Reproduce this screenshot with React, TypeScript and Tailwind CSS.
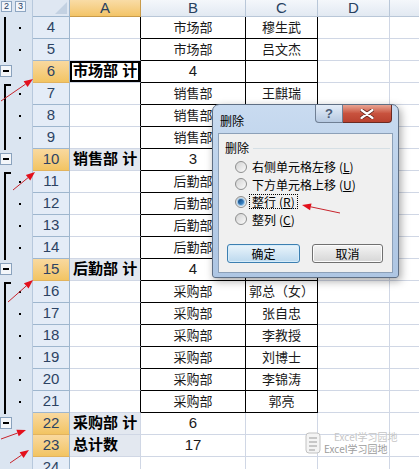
import React from 'react';

interface SheetRow {
  n: number;
  a?: string;
  b?: string;
  c?: string;
  selected?: boolean;
  active?: boolean;
}

const rows: SheetRow[] = [
  { n: 4, b: '市场部', c: '穆生武' },
  { n: 5, b: '市场部', c: '吕文杰' },
  { n: 6, a: '市场部 计', b: '4', selected: true, active: true },
  { n: 7, b: '销售部', c: '王麒瑞' },
  { n: 8, b: '销售部' },
  { n: 9, b: '销售部' },
  { n: 10, a: '销售部 计', b: '3', selected: true },
  { n: 11, b: '后勤部' },
  { n: 12, b: '后勤部' },
  { n: 13, b: '后勤部' },
  { n: 14, b: '后勤部' },
  { n: 15, a: '后勤部 计', b: '4', selected: true },
  { n: 16, b: '采购部', c: '郭总（女）' },
  { n: 17, b: '采购部', c: '张自忠' },
  { n: 18, b: '采购部', c: '李教授' },
  { n: 19, b: '采购部', c: '刘博士' },
  { n: 20, b: '采购部', c: '李锦涛' },
  { n: 21, b: '采购部', c: '郭亮' },
  { n: 22, a: '采购部 计', b: '6', selected: true },
  { n: 23, a: '总计数', b: '17', selected: true },
  { n: 24 },
];

// page y of a row's top edge (header is 17px, rows are 22px)
const rowTop = (n: number) => 17 + (n - 4) * 22;

const detailRows = [4, 5, 7, 8, 9, 11, 12, 13, 14, 16, 17, 18, 19, 20, 21];
const minusRows = [6, 10, 15, 22];
const groups = [
  { from: 7, to: 10 },
  { from: 11, to: 15 },
  { from: 16, to: 22 },
];

const OutlineBar: React.FC = () => (
  <div className="w-[33px] shrink-0 flex flex-col bg-[#dbe5f1] border-r border-[#b7c8dc]">
    <div className="h-[17px] flex items-start gap-[3px] pl-[1px] pt-[1px]">
      <div className="w-[11px] h-[11px] border border-[#8ea6c2] bg-[#f2f5fa] text-[9px] leading-[9px] text-[#1f3c62] flex items-center justify-center font-['Liberation_Sans',sans-serif]">
        2
      </div>
      <div className="w-[11px] h-[11px] border border-[#8ea6c2] bg-[#f2f5fa] text-[9px] leading-[9px] text-[#1f3c62] flex items-center justify-center font-['Liberation_Sans',sans-serif]">
        3
      </div>
    </div>
    <svg width="32" height="452" viewBox="0 17 32 452" className="block">
      {/* first group continues from above */}
      <rect x="4" y="17" width="2" height="45" fill="#000" />
      {groups.map((g) => {
        const top = rowTop(g.from) + 1;
        const bottom = rowTop(g.to) + 1;
        return (
          <g key={g.from}>
            <rect x="4" y={top} width="7" height="2" fill="#000" />
            <rect x="4" y={top} width="2" height={bottom - top} fill="#000" />
          </g>
        );
      })}
      {detailRows.map((n) => (
        <rect key={n} x="19" y={rowTop(n) + 10} width="2" height="2" fill="#000" />
      ))}
      {minusRows.map((n) => (
        <g key={n}>
          <rect x="0.5" y={rowTop(n) + 4.5} width="11" height="11" fill="#f3f6fa" stroke="#8aa2bd" />
          <rect x="3" y={rowTop(n) + 9} width="6" height="2" fill="#000" />
        </g>
      ))}
    </svg>
  </div>
);

const ColHead: React.FC<{ label: string; w: string; active?: boolean }> = ({ label, w, active }) => (
  <div
    className={
      active
        ? `${w} h-[17px] shrink-0 flex items-center justify-center border-r border-b border-[#c99b4a] bg-gradient-to-b from-[#f9dca6] to-[#f3c467] text-[15px] text-[#27415f] font-['Liberation_Sans',sans-serif]`
        : `${w} h-[17px] shrink-0 flex items-center justify-center border-r border-b border-[#b9c7d8] bg-gradient-to-b from-[#f4f7fb] to-[#e2e9f2] text-[15px] text-[#27415f] font-['Liberation_Sans',sans-serif]`
    }
  >
    {label}
  </div>
);

const SheetLine: React.FC<{ row: SheetRow }> = ({ row }) => {
  const inTable = row.n <= 21;
  return (
    <div className="flex h-[22px] font-['Liberation_Sans','Noto_Sans_CJK_SC',sans-serif]">
      <div
        className={
          row.selected
            ? 'w-[37px] shrink-0 flex items-center justify-center border-r border-b border-r-[#9eb6ce] border-b-[#e2b35e] bg-gradient-to-b from-[#f9d99f] to-[#f2c462] text-[15px] text-[#2c4363]'
            : 'w-[37px] shrink-0 flex items-center justify-center border-r border-b border-[#9eb6ce] bg-[#e4ecf7] text-[15px] text-[#2c4363]'
        }
      >
        {row.n}
      </div>
      <div
        className={[
          'w-[71px] shrink-0 flex items-center pl-[3px] border-b border-r border-b-[#d0d7e5] whitespace-nowrap overflow-hidden text-[15px] font-bold text-black',
          inTable ? 'border-r-black' : 'border-r-[#d0d7e5]',
          row.active ? 'bg-white shadow-[inset_0_0_0_2px_#000]' : row.selected ? 'bg-[#e3e8f0]' : 'bg-white',
        ].join(' ')}
      >
        {row.a}
      </div>
      <div
        className={
          inTable
            ? 'w-[105px] shrink-0 flex items-center justify-center border-b border-r border-black text-[13px] text-[#1a1a1a]'
            : 'w-[105px] shrink-0 flex items-center justify-center border-b border-r border-[#d0d7e5] text-[15px] text-[#1a1a1a]'
        }
      >
        <span className={/\d/.test(row.b ?? '') ? 'text-[15px]' : ''}>{row.b}</span>
      </div>
      <div
        className={
          inTable
            ? 'w-[72px] shrink-0 flex items-center justify-center border-b border-r border-black text-[13px] text-[#1a1a1a] whitespace-nowrap'
            : 'w-[72px] shrink-0 flex items-center justify-center border-b border-r border-[#d0d7e5] text-[13px] text-[#1a1a1a]'
        }
      >
        {row.c}
      </div>
      <div className="w-[72px] shrink-0 border-b border-r border-[#d0d7e5]" />
      <div className="w-[62px] shrink-0 border-b border-r border-[#d0d7e5]" />
    </div>
  );
};

const Sheet: React.FC = () => (
  <div className="flex flex-col">
    <div className="flex">
      <div className="w-[37px] h-[17px] shrink-0 border-r border-b border-[#9eb6ce] bg-[#dfe7f2] flex items-end justify-end pr-[2px] pb-[2px]">
        <svg width="12" height="12" viewBox="0 0 12 12">
          <polygon points="12,0 12,12 0,12" fill="#c3d1e2" />
        </svg>
      </div>
      <ColHead label="A" w="w-[71px]" active />
      <ColHead label="B" w="w-[105px]" />
      <ColHead label="C" w="w-[72px]" />
      <ColHead label="D" w="w-[72px]" />
      <ColHead label="" w="w-[62px]" />
    </div>
    {rows.map((r) => (
      <SheetLine key={r.n} row={r} />
    ))}
  </div>
);

const Radio: React.FC<{ checked?: boolean }> = ({ checked }) => (
  <span className="w-[12px] h-[12px] shrink-0 rounded-full border border-[#8e8f8f] bg-gradient-to-br from-[#d2d2d2] to-[#fbfbfb] flex items-center justify-center">
    {checked && <span className="w-[6px] h-[6px] rounded-full bg-gradient-to-br from-[#0b3f78] to-[#4f9fe0] shadow-[0_0_0_1px_#9cc7ea]" />}
  </span>
);

const Option: React.FC<{ label: string; hot: string; checked?: boolean }> = ({ label, hot, checked }) => (
  <div className="h-[17.5px] flex items-center">
    <Radio checked={checked} />
    <span
      className={
        checked
          ? 'ml-[2px] px-[2px] leading-[13px] border border-dotted border-black whitespace-nowrap'
          : 'ml-[2px] px-[2px] leading-[13px] border border-transparent whitespace-nowrap'
      }
    >
      {label}
      <span className="ml-[3px]">
        (<span className="underline">{hot}</span>)
      </span>
    </span>
  </div>
);

const DeleteDialog: React.FC = () => (
  <div className="absolute left-[212px] top-[104px] w-[187px] h-[174px] flex flex-col px-[5px] pb-[4px] rounded-t-[7px] rounded-b-[3px] border border-[#5f6f84] bg-gradient-to-b from-[#c9dbf0] via-[#b9cfe9] to-[#aec6e3] shadow-[2px_3px_8px_rgba(0,0,0,0.35)] text-[12px] text-black font-['Noto_Sans_CJK_SC',sans-serif]">
    <div className="h-[28px] flex items-start">
      <span className="mt-[7px] ml-[2px]">删除</span>
      <div className="ml-auto mr-[1px] flex">
        <div className="w-[28px] h-[18px] flex items-center justify-center rounded-bl-[4px] border border-t-0 border-[#6f7f94] bg-gradient-to-b from-[#e4edf8] to-[#b6c9e1] text-[13px] font-bold text-[#4a5b74] font-['Liberation_Sans',sans-serif]">
          ?
        </div>
        <div className="w-[49px] h-[18px] flex items-center justify-center rounded-br-[4px] border border-t-0 border-l-0 border-[#6b2a22] bg-gradient-to-b from-[#e8a493] via-[#c8523e] to-[#b9412f]">
          <svg width="14" height="10" viewBox="0 0 14 10">
            <path d="M1.5 1 L12.5 9 M1.5 9 L12.5 1" stroke="#5e231c" strokeWidth="4" strokeLinecap="round" />
            <path d="M1.5 1 L12.5 9 M1.5 9 L12.5 1" stroke="#fff" strokeWidth="2.2" strokeLinecap="round" />
          </svg>
        </div>
      </div>
    </div>
    <div className="flex-1 flex flex-col border border-[#8ca0b8] bg-[#f0f0f0] pt-[6px]">
      <div className="h-[16px] flex items-center pl-[6px] pr-[2px]">
        <span>删除</span>
        <div className="flex-1 h-px ml-[4px] bg-[#d5dfe5]" />
      </div>
      <div className="flex flex-col pl-[16px] mt-[2px]">
        <Option label="右侧单元格左移" hot="L" />
        <Option label="下方单元格上移" hot="U" />
        <Option label="整行" hot="R" checked />
        <Option label="整列" hot="C" />
      </div>
      <div className="flex gap-[12px] pl-[8px] mt-[16px]">
        <div className="w-[73px] h-[19px] flex items-center justify-center rounded-[3px] border border-[#3c7fb1] bg-gradient-to-b from-[#eaf4fb] to-[#bcd9ee] shadow-[inset_0_0_0_1px_#d6ecfa]">
          确定
        </div>
        <div className="w-[71px] h-[19px] flex items-center justify-center rounded-[3px] border border-[#707070] bg-gradient-to-b from-[#f4f4f4] to-[#d6d6d6] shadow-[inset_0_0_0_1px_#fcfcfc]">
          取消
        </div>
      </div>
    </div>
  </div>
);

const Watermark: React.FC = () => (
  <div className="absolute left-[305px] top-[431px] flex items-center gap-[3px] pointer-events-none">
    <svg width="16" height="22" viewBox="0 0 16 22">
      <rect x="1" y="1" width="14" height="20" rx="3" fill="#f4f4f4" stroke="#c2c2c2" />
      <path d="M4 6 H12 M4 10 H12 M4 14 H12 M4 18 H10" stroke="#b8b8b8" strokeWidth="1.5" />
    </svg>
    <div className="flex flex-col text-[10px] leading-[12px] font-['Noto_Sans_CJK_SC',sans-serif]">
      <span className="ml-[10px] text-[#c6c6c6]">Excel学习园地</span>
      <span className="text-[#9c9c9c]">Excel学习园地</span>
    </div>
  </div>
);

const Arrow: React.FC<{ x1: number; y1: number; x2: number; y2: number }> = ({ x1, y1, x2, y2 }) => {
  const dx = x2 - x1;
  const dy = y2 - y1;
  const len = Math.hypot(dx, dy);
  const ux = dx / len;
  const uy = dy / len;
  const hl = 9;
  const hw = 3.5;
  const bx = x2 - ux * hl;
  const by = y2 - uy * hl;
  const pts = `${x2},${y2} ${bx - uy * hw},${by + ux * hw} ${bx + uy * hw},${by - ux * hw}`;
  return (
    <g>
      <line x1={x1} y1={y1} x2={bx} y2={by} stroke="#c8242c" strokeWidth="1" />
      <polygon points={pts} fill="#e3101c" />
    </g>
  );
};

const arrows = [
  { x1: 1, y1: 101, x2: 33, y2: 79 },
  { x1: 13, y1: 190, x2: 35, y2: 172 },
  { x1: 8, y1: 302, x2: 33, y2: 280 },
  { x1: 1, y1: 439, x2: 26, y2: 430 },
  { x1: 10, y1: 463, x2: 29, y2: 450 },
  { x1: 340, y1: 213, x2: 302, y2: 205 },
];

export default function App() {
  return (
    <div className="relative w-[419px] h-[469px] overflow-hidden bg-white">
      <div className="flex">
        <OutlineBar />
        <Sheet />
      </div>
      <DeleteDialog />
      <Watermark />
      <svg className="absolute left-0 top-0 pointer-events-none" width="419" height="469">
        {arrows.map((a, i) => (
          <Arrow key={i} {...a} />
        ))}
      </svg>
    </div>
  );
}
